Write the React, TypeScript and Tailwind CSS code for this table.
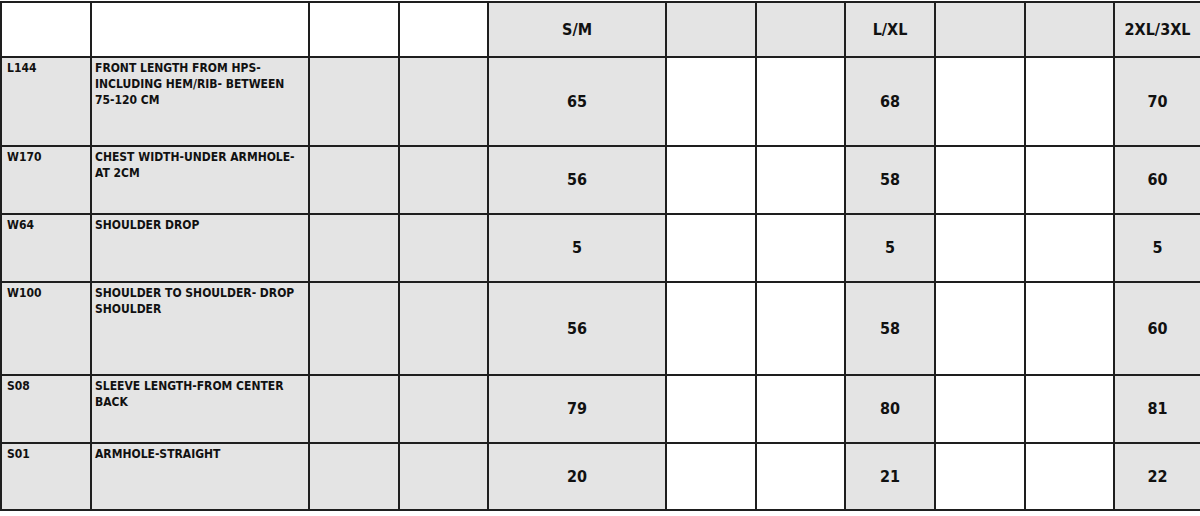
import React from "react";

type Row = { code: string; desc: string[]; sm: string; lxl: string; xxl: string };

const rows: Row[] = [
  { code: "L144", desc: ["FRONT LENGTH FROM HPS-", "INCLUDING HEM/RIB- BETWEEN", "75-120 CM"], sm: "65", lxl: "68", xxl: "70" },
  { code: "W170", desc: ["CHEST WIDTH-UNDER ARMHOLE-", "AT 2CM"], sm: "56", lxl: "58", xxl: "60" },
  { code: "W64", desc: ["SHOULDER DROP"], sm: "5", lxl: "5", xxl: "5" },
  { code: "W100", desc: ["SHOULDER TO SHOULDER- DROP", "SHOULDER"], sm: "56", lxl: "58", xxl: "60" },
  { code: "S08", desc: ["SLEEVE LENGTH-FROM CENTER", "BACK"], sm: "79", lxl: "80", xxl: "81" },
  { code: "S01", desc: ["ARMHOLE-STRAIGHT"], sm: "20", lxl: "21", xxl: "22" },
];

const font = { fontFamily: '"DejaVu Sans Condensed", "DejaVu Sans", "Liberation Sans", sans-serif' };

const G = "bg-[#e4e4e4]";
const W = "bg-white";

function Num({ v, gray }: { v: string; gray: boolean }) {
  return (
    <div className={`${gray ? G : W} flex items-center justify-center text-[16px] font-bold text-[#111]`}>{v}</div>
  );
}

export default function App() {
  return (
    <div className="w-[1200px] h-[516px] bg-white overflow-hidden pt-px" style={font}>
      <div className="grid grid-cols-[88px_216px_88px_87px_176px_88px_87px_88px_88px_87px_1fr] grid-rows-[53px_87px_66px_66px_91px_66px_65px] gap-[2px] bg-[#1e1e1e] pl-[2px] pt-[2px] pb-[2px] w-[1200px]">
        <div className={W} />
        <div className={W} />
        <div className={W} />
        <div className={W} />
        <div className={`${G} flex items-center justify-center text-[16px] font-bold text-[#111]`}>S/M</div>
        <div className={G} />
        <div className={G} />
        <div className={`${G} flex items-center justify-center text-[16px] font-bold text-[#111]`}>L/XL</div>
        <div className={G} />
        <div className={G} />
        <div className={`${G} flex items-center justify-center text-[16px] font-bold text-[#111]`}>2XL/3XL</div>
        {rows.map((r) => (
          <React.Fragment key={r.code}>
            <div className={`${G} pl-[5px] pt-[2px] text-[12px] leading-[16px] font-bold text-[#111]`}>{r.code}</div>
            <div className={`${G} pl-[3px] pt-[2px] text-[12px] leading-[16px] font-bold text-[#111]`}>
              {r.desc.map((d) => (
                <div key={d}>{d}</div>
              ))}
            </div>
            <div className={G} />
            <div className={G} />
            <Num v={r.sm} gray />
            <div className={W} />
            <div className={W} />
            <Num v={r.lxl} gray />
            <div className={W} />
            <div className={W} />
            <Num v={r.xxl} gray />
          </React.Fragment>
        ))}
      </div>
    </div>
  );
}
